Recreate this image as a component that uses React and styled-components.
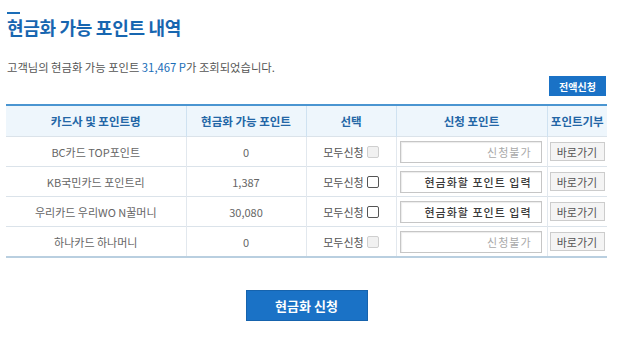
import React from 'react'
import styled, { createGlobalStyle } from 'styled-components'

const GlobalStyle = createGlobalStyle`
  body {
    margin: 0;
    background: #ffffff;
    font-family: "Noto Sans CJK KR", "Noto Sans", sans-serif;
  }
`

const Page = styled.div`
  width: 640px;
  height: 339px;
  padding: 12px 0 0 6px;
  box-sizing: border-box;
`

const TitleBar = styled.div`
  width: 13px;
  height: 2px;
  margin-left: 1px;
  background: #1b6db8;
`

const Title = styled.h2`
  margin: 2px 0 0 1px;
  font-size: 18px;
  line-height: 22px;
  font-weight: 700;
  color: #1766b0;
  letter-spacing: -0.3px;
`

const Summary = styled.p`
  margin: 21px 0 0 1px;
  font-size: 11.3px;
  line-height: 16px;
  color: #555555;
`

const Point = styled.span`
  color: #1a6db8;
`

const TopActions = styled.div`
  width: 601px;
  display: flex;
  justify-content: flex-end;
  margin-top: 1px;
`

const SmallButton = styled.button`
  width: 57px;
  height: 20px;
  margin-right: 1px;
  border: none;
  background: #1a72c6;
  color: #ffffff;
  font-family: inherit;
  font-size: 10px;
  font-weight: 700;
  padding: 0;
`

const Table = styled.table`
  width: 601px;
  margin-top: 8px;
  border-collapse: collapse;
  border-top: 2px solid #4a95d1;
  border-bottom: 2px solid #b9cfe0;
  table-layout: fixed;
`

const Th = styled.th`
  height: 30px;
  padding: 0;
  background: #eef6fc;
  color: #2366a6;
  font-size: 11.5px;
  font-weight: 700;
  border-left: 1px solid #cfe2f1;
  &:first-child { border-left: none; }
`

const Td = styled.td`
  height: 29px;
  padding: 0;
  text-align: center;
  font-size: 11px;
  color: #666666;
  border-top: 1px solid #dbe3ea;
  border-left: 1px solid #e2e8ee;
  &:first-child { border-left: none; }
`

const SelectCell = styled.div`
  display: flex;
  align-items: center;
  justify-content: center;
  gap: 3px;
  color: #555555;
`

const Check = styled.input`
  appearance: none;
  margin: 0;
  width: 12px;
  height: 12px;
  border: 1px solid ${p => (p.disabled ? '#cfcfcf' : '#555555')};
  background: ${p => (p.disabled ? '#f1f1f1' : '#ffffff')};
  border-radius: 2px;
  box-sizing: border-box;
`

const PointInput = styled.input`
  display: block;
  width: 142px;
  height: 22px;
  margin-left: 3px;
  box-sizing: border-box;
  border: 1px solid #c6c6c6;
  box-shadow: inset 1px 1px 1px rgba(0, 0, 0, 0.08);
  background: #ffffff;
  padding: 0 9px;
  text-align: right;
  font-family: inherit;
  font-size: 11px;
  letter-spacing: 1px;
  &::placeholder {
    color: ${p => (p.disabled ? '#a9a9a9' : '#3a3a3a')};
    font-weight: ${p => (p.disabled ? 400 : 500)};
  }
`

const GoButton = styled.button`
  display: block;
  width: 55px;
  height: 19px;
  margin-left: 2px;
  padding: 0;
  border: 1px solid #cccccc;
  background: #f4f4f4;
  color: #555555;
  font-family: inherit;
  font-size: 11px;
`

const Footer = styled.div`
  width: 601px;
  display: flex;
  justify-content: center;
  margin-top: 32px;
`

const SubmitButton = styled.button`
  width: 122px;
  height: 31px;
  border: 1px solid #1663ad;
  background: #1a72c6;
  color: #ffffff;
  font-family: inherit;
  font-size: 13px;
  font-weight: 700;
  padding: 0;
`

const rows = [
  { name: 'BC카드 TOP포인트', point: '0', open: false },
  { name: 'KB국민카드 포인트리', point: '1,387', open: true },
  { name: '우리카드 우리WO N꿀머니', point: '30,080', open: true },
  { name: '하나카드 하나머니', point: '0', open: false },
]

export default function App() {
  return (
    <Page>
      <GlobalStyle />
      <TitleBar />
      <Title>현금화 가능 포인트 내역</Title>
      <Summary>
        고객님의 현금화 가능 포인트 <Point>31,467 P</Point>가 조회되었습니다.
      </Summary>
      <TopActions>
        <SmallButton>전액신청</SmallButton>
      </TopActions>
      <Table>
        <colgroup>
          <col style={{ width: 180 }} />
          <col style={{ width: 120 }} />
          <col style={{ width: 90 }} />
          <col style={{ width: 151 }} />
          <col style={{ width: 60 }} />
        </colgroup>
        <thead>
          <tr>
            <Th>카드사 및 포인트명</Th>
            <Th>현금화 가능 포인트</Th>
            <Th>선택</Th>
            <Th>신청 포인트</Th>
            <Th>포인트기부</Th>
          </tr>
        </thead>
        <tbody>
          {rows.map(row => (
            <tr key={row.name}>
              <Td>{row.name}</Td>
              <Td>{row.point}</Td>
              <Td>
                <SelectCell>
                  모두신청
                  <Check type="checkbox" disabled={!row.open} />
                </SelectCell>
              </Td>
              <Td>
                <PointInput
                  disabled={!row.open}
                  placeholder={row.open ? '현금화할 포인트 입력' : '신청불가'}
                />
              </Td>
              <Td>
                <GoButton>바로가기</GoButton>
              </Td>
            </tr>
          ))}
        </tbody>
      </Table>
      <Footer>
        <SubmitButton>현금화 신청</SubmitButton>
      </Footer>
    </Page>
  )
}
